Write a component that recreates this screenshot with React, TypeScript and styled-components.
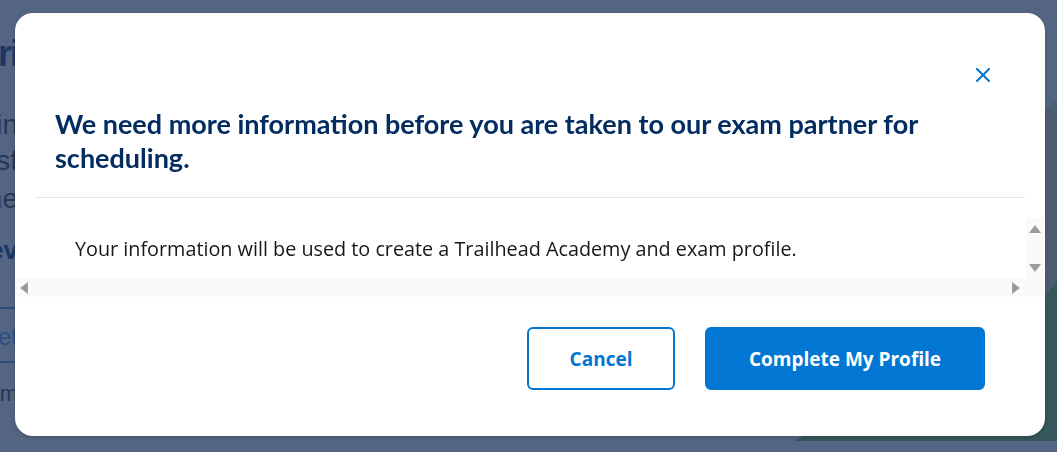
import React from 'react';
import styled, { createGlobalStyle, css } from 'styled-components';

const GlobalStyle = createGlobalStyle`
  html, body { margin: 0; padding: 0; height: 100%; overflow: hidden; }
  body { font-family: "Open Sans", "Liberation Sans", sans-serif; }
  * { box-sizing: border-box; }
`;

const Page = styled.div`
  display: grid;
  grid-template-rows: 441px 11px;
  height: 452px;
  background: #536582;
`;

const Stage = styled.div`
  display: grid;
  overflow: hidden;
  & > * { grid-area: 1 / 1; }
`;

const Scenery = styled.svg`
  display: block;
  width: 100%;
  height: 100%;
`;

const Sliver = styled.div`
  width: 18px;
  overflow: hidden;
  display: flex;
  flex-direction: column;
  align-items: flex-end;
  padding-top: 36px;
  font-family: "Liberation Sans", Arial, sans-serif;
`;

const SliverText = styled.div<{ $size: number; $weight?: number; $color: string; $mt: number; $tight?: boolean }>`
  white-space: nowrap;
  font-size: ${p => p.$size}px;
  line-height: 1;
  font-weight: ${p => p.$weight ?? 400};
  letter-spacing: ${p => (p.$tight ? '-2px' : '0')};
  color: ${p => p.$color};
  margin-top: ${p => p.$mt}px;
`;

const SliverRule = styled.div<{ $mt: number }>`
  align-self: stretch;
  height: 2px;
  background: #2d4a7c;
  margin-top: ${p => p.$mt}px;
`;

const FooterBand = styled.div`
  background: #536684;
`;

const Backdrop = styled.div`
  position: fixed;
  inset: 0;
  display: flex;
  align-items: flex-start;
  padding: 13px 12px 0 15px;
`;

const Modal = styled.section`
  width: 1030px;
  height: 423px;
  background: #fff;
  border-radius: 18px;
  display: flex;
  flex-direction: column;
  overflow: hidden;
  box-shadow: 0 2px 4px rgba(0, 0, 0, 0.16);
`;

const Header = styled.header`
  display: flex;
  flex-direction: column;
  padding: 46px 46px 22px 40px;
`;

const CloseButton = styled.button`
  align-self: flex-end;
  width: 32px;
  height: 32px;
  padding: 0;
  border: 0;
  background: transparent;
  color: #0176d3;
  display: flex;
  align-items: center;
  justify-content: center;
  cursor: pointer;
`;

const Title = styled.h2`
  margin: 16px 0 0;
  max-width: 930px;
  font-family: Lato, "Liberation Sans", sans-serif;
  font-weight: 700;
  font-size: 27px;
  line-height: 34px;
  color: #032d60;
`;

const Divider = styled.hr`
  margin: 0 20px;
  border: 0;
  border-top: 1px solid #e5e5e5;
`;

const ScrollArea = styled.div`
  margin-top: 20px;
  display: grid;
  grid-template-columns: 1fr 17px 2px;
  grid-template-rows: 60px 19px;
`;

const ScrollContent = styled.div`
  overflow: hidden;
  padding: 18px 60px 0;
`;

const Rail = styled.div<{ $dir: 'v' | 'h' }>`
  background: #fafafa;
  display: flex;
  justify-content: space-between;
  align-items: center;
  ${p =>
    p.$dir === 'v'
      ? css`
          flex-direction: column;
          padding: 7px 0 6px;
        `
      : css`
          flex-direction: row;
          grid-column: 1;
          padding: 0 6px 0 5px;
        `}
`;

const Corner = styled.div`
  background: #fafafa;
`;

const ArrowSvg = styled.svg`
  display: block;
  fill: #9b9b9b;
`;

const arrowPoints = {
  up: '0,8 6,0 12,8',
  down: '0,0 12,0 6,8',
  left: '8,0 8,12 0,6',
  right: '0,0 8,6 0,12',
};

function Arrow({ to }: { to: keyof typeof arrowPoints }) {
  const vertical = to === 'up' || to === 'down';
  const w = vertical ? 12 : 8;
  const h = vertical ? 8 : 12;
  return (
    <ArrowSvg width={w} height={h} viewBox={`0 0 ${w} ${h}`}>
      <polygon points={arrowPoints[to]} />
    </ArrowSvg>
  );
}

const BodyText = styled.p`
  margin: 0;
  font-size: 19.8px;
  line-height: 26px;
  white-space: nowrap;
  color: #181818;
`;

const Footer = styled.footer`
  display: flex;
  justify-content: flex-end;
  gap: 30px;
  padding: 30px 60px 46px;
`;

const Button = styled.button<{ $primary?: boolean; $width: number }>`
  width: ${p => p.$width}px;
  height: 63px;
  padding: 0;
  border-radius: 6px;
  border: 2px solid #0176d3;
  background: ${p => (p.$primary ? '#0176d3' : '#fff')};
  color: ${p => (p.$primary ? '#fff' : '#0176d3')};
  font-family: "Open Sans", "Liberation Sans", sans-serif;
  font-weight: 700;
  font-size: 19px;
  cursor: pointer;
`;

export default function App() {
  return (
    <>
      <GlobalStyle />
      <Page>
        <Stage>
          <Scenery viewBox="0 0 1057 441" preserveAspectRatio="none" aria-hidden>
            <polygon points="980,160 1057,100 1057,441 900,441" fill="#4e5e71" />
            <polygon points="795,441 960,340 1040,300 1057,282 1057,441" fill="#36575b" />
          </Scenery>
          <Sliver>
            <SliverText $size={36} $weight={700} $color="#1f3665" $mt={0} $tight>ri</SliverText>
            <SliverText $size={28} $color="#2a3753" $mt={39}>in</SliverText>
            <SliverText $size={28} $color="#2a3753" $mt={8}>usf</SliverText>
            <SliverText $size={28} $color="#2a3753" $mt={10}>the</SliverText>
            <SliverText $size={26} $weight={700} $color="#1e3664" $mt={24}>Rev</SliverText>
            <SliverRule $mt={44} />
            <SliverText $size={24} $color="#2b4d82" $mt={16}>Det</SliverText>
            <SliverRule $mt={12} />
            <SliverText $size={22} $color="#2a3753" $mt={20}>Exam</SliverText>
          </Sliver>
        </Stage>
        <FooterBand />
      </Page>
      <Backdrop>
        <Modal role="dialog" aria-modal="true">
          <Header>
            <CloseButton aria-label="Close">
              <svg width="14" height="14" viewBox="0 0 14 14">
                <path d="M1 1 L13 13 M13 1 L1 13" stroke="currentColor" strokeWidth="2" strokeLinecap="square" />
              </svg>
            </CloseButton>
            <Title>We need more information before you are taken to our exam partner for scheduling.</Title>
          </Header>
          <Divider />
          <ScrollArea>
            <ScrollContent>
              <BodyText>Your information will be used to create a Trailhead Academy and exam profile.</BodyText>
            </ScrollContent>
            <Rail $dir="v" aria-hidden>
              <Arrow to="up" />
              <Arrow to="down" />
            </Rail>
            <span />
            <Rail $dir="h" aria-hidden>
              <Arrow to="left" />
              <Arrow to="right" />
            </Rail>
            <Corner />
          </ScrollArea>
          <Footer>
            <Button $width={148}>Cancel</Button>
            <Button $primary $width={280}>Complete My Profile</Button>
          </Footer>
        </Modal>
      </Backdrop>
    </>
  );
}
